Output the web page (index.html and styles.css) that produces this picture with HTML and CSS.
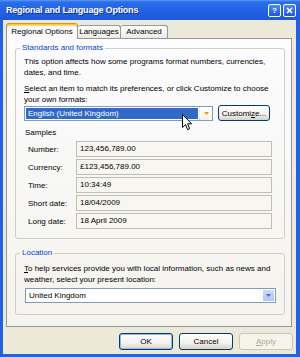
FILE: index.html
```html
<!DOCTYPE html>
<html lang="en">

<head>
    <meta charset="UTF-8" />
    <title>Regional and Language Options</title>
    <link rel="stylesheet" href="styles.css">
</head>

<body>
    <div class="window">
        <div class="titlebar">
            <span class="title">Regional and Language Options</span>
            <div class="caption-btns">
                <span class="cap-btn">?</span>
                <span class="cap-btn">
                    <svg width="7" height="7" viewBox="0 0 7 7"><path d="M1 1L6 6M6 1L1 6" stroke="#fff" stroke-width="1.6" /></svg>
                </span>
            </div>
        </div>

        <div class="client">
            <div class="tabs">
                <div class="tab active">Regional Options</div>
                <div class="tab tab-languages">Languages</div>
                <div class="tab tab-advanced">Advanced</div>
            </div>

            <div class="panel">
                <fieldset class="group formats">
                    <legend>Standards and formats</legend>
                    <p class="intro">This option affects how some programs format numbers, currencies,<br>dates, and time.</p>
                    <p class="intro second"><u>S</u>elect an item to match its preferences, or click Customize to choose<br>your own formats:</p>
                    <div class="combo-row">
                        <div class="combo">
                            <span class="combo-value selected">English (United Kingdom)</span>
                            <span class="drop hot"><svg width="5" height="3" viewBox="0 0 5 3"><path d="M0 0H5L2.5 3Z" fill="#E8962A" /></svg></span>
                        </div>
                        <button class="btn customize">Customi<u>z</u>e...</button>
                    </div>

                    <div class="samples-label">Samples</div>
                    <div class="sample-row"><span class="sample-name">Number:</span><span class="sample-value">123,456,789.00</span></div>
                    <div class="sample-row"><span class="sample-name">Currency:</span><span class="sample-value">£123,456,789.00</span></div>
                    <div class="sample-row"><span class="sample-name">Time:</span><span class="sample-value">10:34:49</span></div>
                    <div class="sample-row"><span class="sample-name">Short date:</span><span class="sample-value">18/04/2009</span></div>
                    <div class="sample-row"><span class="sample-name">Long date:</span><span class="sample-value">18 April 2009</span></div>
                </fieldset>

                <fieldset class="group location">
                    <legend>Location</legend>
                    <p class="intro"><u>T</u>o help services provide you with local information, such as news and<br>weather, select your present location:</p>
                    <div class="combo wide">
                        <span class="combo-value">United Kingdom</span>
                        <span class="drop"><svg width="5" height="3" viewBox="0 0 5 3"><path d="M0 0H5L2.5 3Z" fill="#4A6FC9" /></svg></span>
                    </div>
                </fieldset>
            </div>

            <div class="buttons">
                <button class="btn default">OK</button>
                <button class="btn">Cancel</button>
                <button class="btn" disabled><u>A</u>pply</button>
            </div>
        </div>

        <!-- mouse pointer over the locale combo -->
        <svg class="cursor" width="11" height="17" viewBox="0 0 11 17">
            <path d="M0.5 0.5V13.5L3.5 10.6L5.6 15.6L7.7 14.7L5.6 9.8H9.6Z" fill="#fff" stroke="#000" stroke-width="1" stroke-linejoin="round" />
        </svg>
    </div>
</body>

</html>
```

FILE: styles.css
```css
body {
    margin: 0;
    font-family: 'Liberation Sans', Arial, sans-serif;
    font-size: 8px;
    color: #000;
    background-color: #fff;
}

.window {
    position: relative;
    width: 300px;
    height: 357px;
    display: flex;
    flex-direction: column;
    background-color: #2461DC;
    /* xp blue frame */
    overflow: hidden;
}

.titlebar {
    flex: none;
    height: 20px;
    display: flex;
    align-items: center;
    justify-content: space-between;
    padding: 0 4px 0 6px;
    box-sizing: border-box;
    background: linear-gradient(#5A9BF8 0, #2B6EE8 2px, #2263E2 50%, #1D5AD9 100%);
}

.title {
    color: #fff;
    font-weight: bold;
    font-size: 9px;
    letter-spacing: -0.2px;
    text-shadow: 1px 1px 0 #0B2F9E;
}

.caption-btns {
    display: flex;
    gap: 2px;
}

.cap-btn {
    width: 13px;
    height: 13px;
    box-sizing: border-box;
    border: 1px solid #fff;
    border-radius: 2px;
    background: linear-gradient(#4A8BF5, #2157D8);
    color: #fff;
    font-weight: bold;
    font-size: 8px;
    display: flex;
    align-items: center;
    justify-content: center;
}

.client {
    flex: 1;
    margin: 0 4px 3px 3px;
    background-color: #ECE9D8;
}

/* tab strip */

.tabs {
    display: flex;
    align-items: flex-end;
    height: 15px;
    padding: 3px 0 0 3px;
    position: relative;
    z-index: 1;
}

.tab {
    height: 13px;
    line-height: 12px;
    box-sizing: border-box;
    border: 1px solid #919B9C;
    border-bottom: none;
    border-radius: 3px 3px 0 0;
    background: linear-gradient(#FFFFFF, #ECEBE6);
    text-align: center;
    white-space: nowrap;
}

.tab.active {
    width: 72px;
    height: 16px;
    margin-bottom: -1px;
    border-top: 1px solid #E68B2C;
    box-shadow: inset 0 1px 0 #FFC83C, inset 0 2px 0 #FFD86F;
    background: #FCFCFE;
    line-height: 14px;
    padding-top: 1px;
}

.tab-languages {
    width: 43px;
    border-left: none;
}

.tab-advanced {
    width: 47px;
    border-left: none;
}

/* tab page */

.panel {
    margin-left: 3px;
    width: 286px;
    height: 289px;
    box-sizing: border-box;
    border: 1px solid #919B9C;
    background: linear-gradient(#FCFCFE, #F4F3EE);
    padding: 0 6px 0 8px;
}

.group {
    margin: 4px 0 0;
    padding: 0 0 9px 8px;
    border: 1px solid #D0D0BF;
    border-radius: 3px;
    min-width: 0;
}

.group legend {
    margin-left: -4px;
    padding: 0 2px;
    line-height: 10px;
    color: #0046D5;
}

.group.location {
    margin-top: 9px;
    padding-bottom: 11px;
}

.intro {
    margin: 3px 0 0;
    line-height: 11px;
    white-space: nowrap;
}

.intro.second {
    margin-top: 5px;
}

.location .intro {
    margin-top: 5px;
}

.combo-row {
    display: flex;
    align-items: center;
    height: 16px;
}

.combo {
    width: 189px;
    height: 15px;
    box-sizing: border-box;
    border: 1px solid #7F9DB9;
    background: #fff;
    display: flex;
}

.combo.wide {
    width: 251px;
    margin: 3px 0 0 1px;
}

.combo-value {
    flex: 1;
    margin: 1px;
    padding-left: 2px;
    line-height: 11px;
    white-space: nowrap;
}

.combo-value.selected {
    background-color: #316AC5;
    color: #fff;
}

.drop {
    flex: none;
    width: 13px;
    display: flex;
    align-items: center;
    justify-content: center;
    box-sizing: border-box;
    border: 1px solid #fff;
    background: linear-gradient(#CBDAFC, #B1C6F5);
}

.drop.hot {
    border: none;
    border-left: 1px solid #EAE6D8;
    background: linear-gradient(#FFFFFF, #F6F2E4);
}

.samples-label {
    margin: 6px 0 3px 1px;
    line-height: 11px;
}

.sample-row {
    display: flex;
    align-items: center;
    margin-top: 2px;
}

.sample-name {
    width: 52px;
    padding-left: 4px;
    box-sizing: border-box;
}

.sample-value {
    width: 196px;
    height: 16px;
    box-sizing: border-box;
    border: 1px solid #BDBCB5;
    background-color: #F7F6F1;
    padding-left: 3px;
    line-height: 14px;
}

/* push buttons */

.btn {
    width: 54px;
    height: 17px;
    padding: 0;
    font-family: inherit;
    font-size: 8px;
    color: #000;
    border: 1px solid #003C74;
    border-radius: 3px;
    background: linear-gradient(#FFFFFF, #F3F2EC 60%, #D8D2C6);
}

.btn.customize {
    width: 52px;
    height: 16px;
    margin-left: 5px;
}

.btn.default {
    box-shadow: inset 0 0 0 1px #97B5EE;
}

.btn:disabled {
    border-color: #C9C7BA;
    color: #ACA899;
    background: #F5F4EA;
}

.buttons {
    display: flex;
    justify-content: flex-end;
    gap: 6px;
    margin-top: 6px;
    padding-right: 3px;
}

.cursor {
    position: absolute;
    left: 182px;
    top: 114px;
}
```
